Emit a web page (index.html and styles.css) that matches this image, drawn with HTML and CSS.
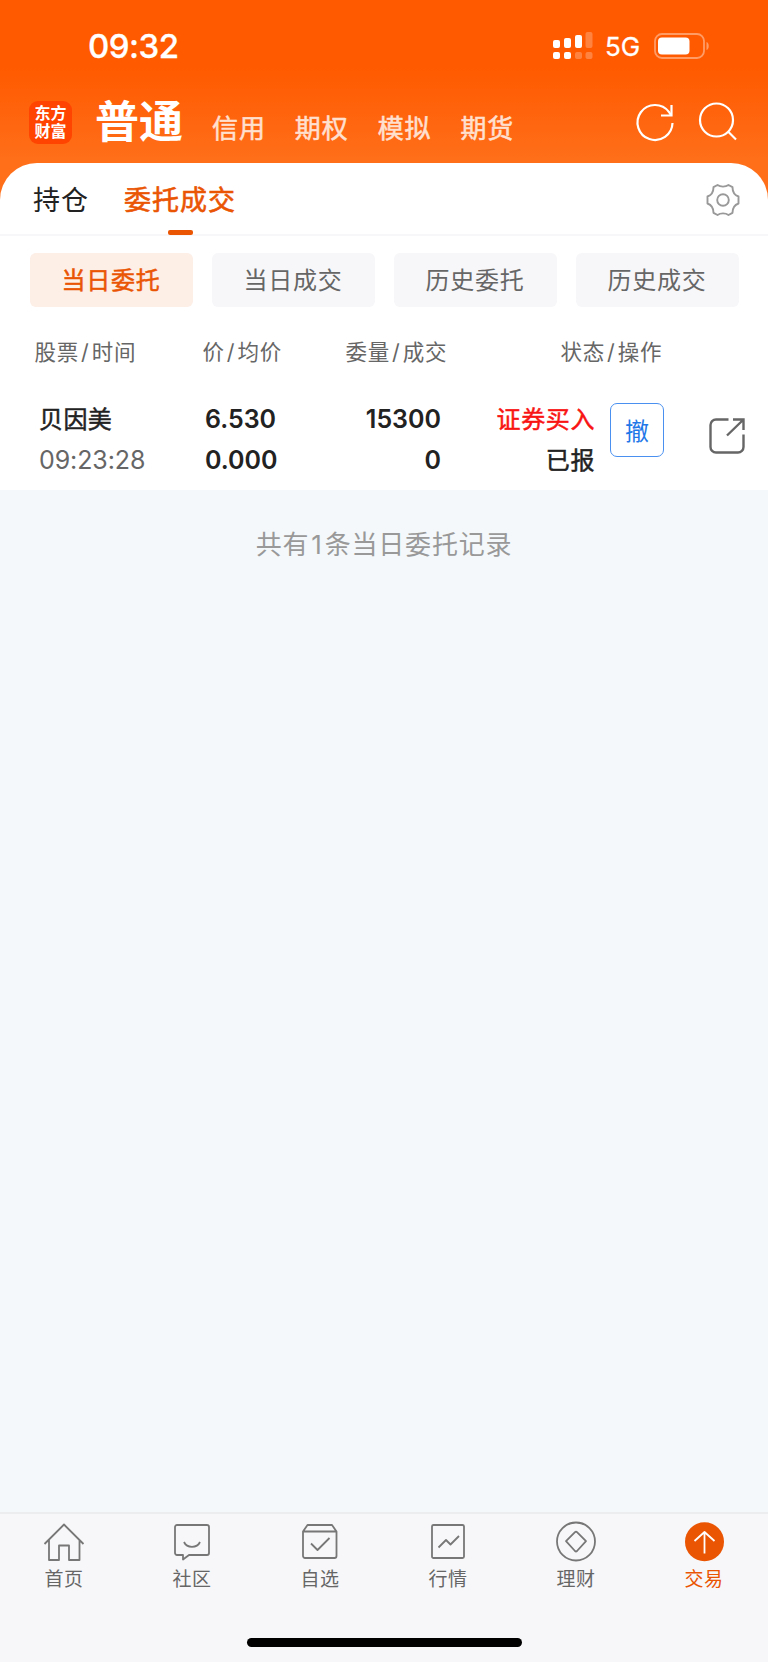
FILE: index.html
```
<!DOCTYPE html>
<html lang="zh-CN">
<head>
    <meta charset="UTF-8">
    <meta name="viewport" content="width=device-width, initial-scale=1.0">
    <title>委托成交</title>
    <link rel="stylesheet" href="styles.css">
</head>
<body>

    <!-- Header -->
    <header class="header">
        <div class="status-bar">
            <span class="clock">09:32</span>
            <svg class="signal" width="40" height="28" viewBox="0 0 40 28" fill="#fff">
                <rect x="0" y="8" width="7" height="8" rx="2"/>
                <rect x="11" y="6" width="7" height="10" rx="2"/>
                <rect x="22" y="3" width="7" height="13" rx="2"/>
                <rect x="32.5" y="0" width="7" height="16" rx="2" opacity="0.25"/>
                <rect x="0" y="20" width="7" height="7" rx="2"/>
                <rect x="11" y="20" width="7" height="7" rx="2"/>
                <rect x="22" y="20" width="7" height="7" rx="2" opacity="0.25"/>
                <rect x="32.5" y="20" width="7" height="7" rx="2" opacity="0.25"/>
            </svg>
            <span class="network">5G</span>
            <svg class="battery" width="57" height="26" viewBox="0 0 57 26">
                <rect x="1" y="1" width="49" height="24" rx="7" fill="none" stroke="#fff" stroke-opacity="0.4" stroke-width="1.8"/>
                <rect x="4" y="4.5" width="31.5" height="17" rx="4" fill="#fff"/>
                <path d="M52.5 9v8c3-1 3-7 0-8z" fill="#fff" fill-opacity="0.4"/>
            </svg>
        </div>

        <div class="main-nav">
            <div class="logo">东方<br>财富</div>
            <div class="nav-item active">普通</div>
            <div class="nav-item">信用</div>
            <div class="nav-item">期权</div>
            <div class="nav-item">模拟</div>
            <div class="nav-item">期货</div>
            <div class="nav-icons">
                <svg width="38" height="40" viewBox="0 0 38 40" fill="none" stroke="#fff" stroke-width="2.2">
                    <path d="M36.5 21A17.500 17.500 0 1 1 33 10L35 13.200"/>
                    <path d="M35.500 3V13.500H25"/>
                </svg>
                <svg width="38" height="40" viewBox="0 0 38 40" fill="none" stroke="#fff" stroke-width="2.2">
                    <circle cx="17.500" cy="18" r="16.500"/>
                    <path d="M29 29.500L37 37.500"/>
                </svg>
            </div>
        </div>
    </header>

    <!-- Sheet -->
    <main class="sheet">
        <div class="tabs">
            <div class="tab">持仓</div>
            <div class="tab active">委托成交</div>
            <svg class="settings" width="34" height="34" viewBox="0 0 34 34" fill="none" stroke="#999" stroke-width="1.900" stroke-linejoin="round">
                <path d="M11.500 2C14.500 4.200 19.500 4.200 22.500 2L26.500 4.200C26.500 8.500 28.500 12 32.500 13.500V20.500C28.500 22 26.500 25.500 26.500 29.800L22.500 32C19.500 29.800 14.500 29.800 11.500 32L7.500 29.800C7.500 25.500 5.500 22 1.500 20.500V13.500C5.500 12 7.500 8.500 7.500 4.200Z"/>
                <circle cx="17" cy="17" r="5.800"/>
            </svg>
        </div>

        <div class="filters">
            <div class="filter active">当日委托</div>
            <div class="filter">当日成交</div>
            <div class="filter">历史委托</div>
            <div class="filter">历史成交</div>
        </div>

        <div class="table-head">
            <span class="col-name">股票<i>/</i>时间</span>
            <span class="col-price">价<i>/</i>均价</span>
            <span class="col-amount">委量<i>/</i>成交</span>
            <span class="col-state">状态<i>/</i>操作</span>
        </div>

        <div class="order">
            <div class="col-name">
                <div class="stock">贝因美</div>
                <div class="time">09:23:28</div>
            </div>
            <div class="col-price">
                <div>6.530</div>
                <div>0.000</div>
            </div>
            <div class="col-amount">
                <div>15300</div>
                <div>0</div>
            </div>
            <div class="col-state">
                <div class="buy">证券买入</div>
                <div class="reported">已报</div>
            </div>
            <button class="cancel-btn">撤</button>
            <svg class="share" width="36" height="36" viewBox="0 0 36 36" fill="none" stroke="#666" stroke-width="2.4">
                <path d="M19.500 1.500H7A5.500 5.500 0 0 0 1.500 7V29A5.500 5.500 0 0 0 7 34.500H29A5.500 5.500 0 0 0 34.500 29V16.500"/>
                <path d="M24 1.500H34.500V12M34 2L18 17.500"/>
            </svg>
        </div>
    </main>

    <div class="summary">共有<span>1</span>条当日委托记录</div>

    <!-- Bottom Bar -->
    <footer class="bottom-bar">
        <div class="bottom-items">
            <div class="bottom-item">
                <svg width="42" height="40" viewBox="0 0 42 40">
                    <path d="M1.500 21L21 1.500L40.500 21M6 17V37H16V22.500H26V37H36.500V17"/>
                </svg>
                <span>首页</span>
            </div>
            <div class="bottom-item">
                <svg width="42" height="40" viewBox="0 0 42 40">
                    <path d="M6 2H36A2 2 0 0 1 38 4V30A2 2 0 0 1 36 32H18L12 36.500V32H6A2 2 0 0 1 4 30V4A2 2 0 0 1 6 2Z"/>
                    <path d="M13 19C16 25.500 26 25.500 29 19"/>
                </svg>
                <span>社区</span>
            </div>
            <div class="bottom-item">
                <svg width="42" height="40" viewBox="0 0 42 40">
                    <path d="M4 8.500L8.500 2H33L37.500 8.500V33A2 2 0 0 1 35.500 35H6A2 2 0 0 1 4 33ZM4 8.500H37.500"/>
                    <path d="M12 20.500L18.500 27L30.500 15"/>
                </svg>
                <span>自选</span>
            </div>
            <div class="bottom-item">
                <svg width="42" height="40" viewBox="0 0 42 40">
                    <rect x="5" y="2" width="32" height="33" rx="1.500"/>
                    <path d="M11.500 24.500L19 17L23.500 21.500L32 13"/>
                </svg>
                <span>行情</span>
            </div>
            <div class="bottom-item">
                <svg width="42" height="40" viewBox="0 0 42 40">
                    <circle cx="21" cy="18.500" r="19"/>
                    <path d="M20 9.200Q21 8.200 22 9.200L31 18.200L22 28Q21 29 20 28L11 18.200Z"/>
                </svg>
                <span>理财</span>
            </div>
            <div class="bottom-item active">
                <svg width="42" height="40" viewBox="0 0 42 40">
                    <circle class="disc" cx="21.500" cy="18.800" r="19.500"/>
                    <path class="arrow" d="M21.500 30.500V9.500M11.500 18L21.500 9L31.500 18"/>
                </svg>
                <span>交易</span>
            </div>
        </div>
        <div class="home-indicator"></div>
    </footer>

</body>
</html>
```
FILE: styles.css
```
* {
    box-sizing: border-box;
}

body {
    margin: 0;
    height: 1662px;
    display: flex;
    flex-direction: column;
    font-family: "Inter", "Noto Sans CJK SC", sans-serif;
    background-color: #f4f8fa;
    color: #222;
    overflow: hidden;
    white-space: nowrap;
}

svg {
    display: block;
    flex-shrink: 0;
    overflow: visible;
}

/* Header */
.header {
    height: 210px;
    flex-shrink: 0;
    background: linear-gradient(#ff5a00 0, #ff5a00 68px, #ff6f1a 163px);
    color: #fff;
}

.status-bar {
    height: 92px;
    padding-left: 88px;
    display: flex;
    align-items: center;
}

.clock {
    width: 465px;
    font-size: 33px;
    font-weight: 500;
    letter-spacing: -0.5px;
    -webkit-text-stroke: 0.3px;
}

.network {
    width: 48px;
    margin-left: 12px;
    padding-top: 1px;
    font-size: 26px;
    -webkit-text-stroke: 0.3px;
}

.signal {
    margin-top: -1px;
}

.battery {
    margin-top: -1px;
    margin-left: 1px;
}

.main-nav {
    height: 71px;
    padding: 0 31px 0 29px;
    display: flex;
    align-items: flex-start;
}

.logo {
    width: 43px;
    height: 43px;
    margin-top: 9px;
    margin-right: 23px;
    padding-top: 3px;
    border-radius: 9px;
    background-color: #ff4300;
    font-size: 16px;
    font-weight: 700;
    line-height: 18px;
    text-align: center;
}

.nav-item {
    margin-top: 18px;
    margin-right: 29px;
    font-size: 26px;
    line-height: 38px;
    letter-spacing: 0.9px;
    opacity: 0.8;
    -webkit-text-stroke: 0.5px;
}

.nav-item.active {
    margin-top: 1px;
    margin-right: 29px;
    font-size: 44px;
    font-weight: 700;
    line-height: 58px;
    letter-spacing: 0;
    opacity: 1;
    -webkit-text-stroke: 0;
}

.nav-icons {
    margin-left: auto;
    margin-top: 10px;
    display: flex;
    gap: 25px;
}

/* Sheet */
.sheet {
    margin-top: -47px;
    height: 327px;
    flex-shrink: 0;
    background-color: #fff;
    border-radius: 37px 37px 0 0;
}

.tabs {
    height: 73px;
    padding: 0 28px 0 33px;
    display: flex;
    align-items: center;
    border-bottom: 2px solid #f7f7f9;
}

.tab {
    height: 71px;
    margin-right: 35px;
    padding-top: 3px;
    font-size: 27px;
    line-height: 70px;
    letter-spacing: 1px;
}

.tab.active {
    color: #ea5504;
    -webkit-text-stroke: 0.6px;
}

.tab.active::after {
    content: "";
    display: block;
    width: 25px;
    height: 5px;
    margin: -6px auto 0;
    border-radius: 2px;
    background-color: #ea5504;
}

.settings {
    margin-left: auto;
    margin-top: 2px;
}

/* Filters */
.filters {
    padding: 17px 29.5px 0;
    display: flex;
    gap: 19px;
}

.filter {
    flex: 1;
    height: 54px;
    border-radius: 6px;
    background-color: #f7f7f9;
    color: #666;
    font-size: 24px;
    line-height: 56px;
    letter-spacing: 0.8px;
    text-align: center;
}

.filter.active {
    background-color: #fdeee6;
    color: #ea5504;
    -webkit-text-stroke: 0.5px;
}

/* Table */
.table-head {
    height: 90px;
    padding-left: 34.5px;
    display: flex;
    color: #666;
    font-size: 21.5px;
    line-height: 91px;
    letter-spacing: 0.8px;
}

.table-head i {
    margin: 0 2px;
    font-style: normal;
}

.table-head .col-name {
    width: 168px;
}

.table-head .col-price {
    width: 143px;
}

.table-head .col-amount {
    width: 215px;
}

.order {
    padding: 1px 0 0 39px;
    display: flex;
    font-size: 25px;
    font-weight: 600;
    line-height: 41px;
}

.order .col-name {
    width: 166px;
    padding-top: 1px;
}

.order .col-price {
    width: 99px;
    padding-top: 1px;
}

.order .col-amount {
    width: 137px;
    padding-top: 1px;
    text-align: right;
}

.order .col-state {
    width: 154px;
    padding-top: 1px;
    text-align: right;
    font-size: 24px;
    font-weight: 400;
    letter-spacing: 0.6px;
    -webkit-text-stroke: 0.5px;
}

.stock {
    font-size: 24px;
    font-weight: 400;
    letter-spacing: 0.4px;
    -webkit-text-stroke: 0.5px;
}

.time {
    color: #666;
    font-weight: 400;
    letter-spacing: -0.1px;
}

.buy {
    color: #f91414;
}

.cancel-btn {
    width: 54px;
    height: 54px;
    margin: 5px 0 0 15px;
    padding: 0 0 2px;
    border: 1px solid #4a90f0;
    border-radius: 7px;
    background: none;
    color: #1f78e8;
    font-family: inherit;
    font-size: 24px;
}

.share {
    margin: 20px 0 0 45px;
}

.summary {
    padding-top: 35px;
    color: #999;
    font-size: 26px;
    line-height: 40px;
    letter-spacing: 0.8px;
    text-align: center;
}

.summary span {
    margin: 0 2px;
}

/* Bottom Bar */
.bottom-bar {
    height: 150px;
    margin-top: auto;
    flex-shrink: 0;
    border-top: 2px solid #ebedef;
    background-color: #f7f7f9;
}

.bottom-items {
    display: flex;
}

.bottom-item {
    flex: 1;
    padding-top: 9px;
    display: flex;
    flex-direction: column;
    align-items: center;
    color: #666;
    font-size: 19px;
    line-height: 34px;
    letter-spacing: 0.5px;
}

.bottom-item svg {
    fill: none;
    stroke: #777;
    stroke-width: 1.8;
    stroke-linejoin: round;
}

.bottom-item.active {
    color: #ea5504;
}

.bottom-item .disc {
    fill: #ea5504;
    stroke: none;
}

.bottom-item .arrow {
    stroke: #fff;
}

.home-indicator {
    width: 275px;
    height: 9px;
    margin: 41px auto 0;
    border-radius: 5px;
    background-color: #000;
}
```
